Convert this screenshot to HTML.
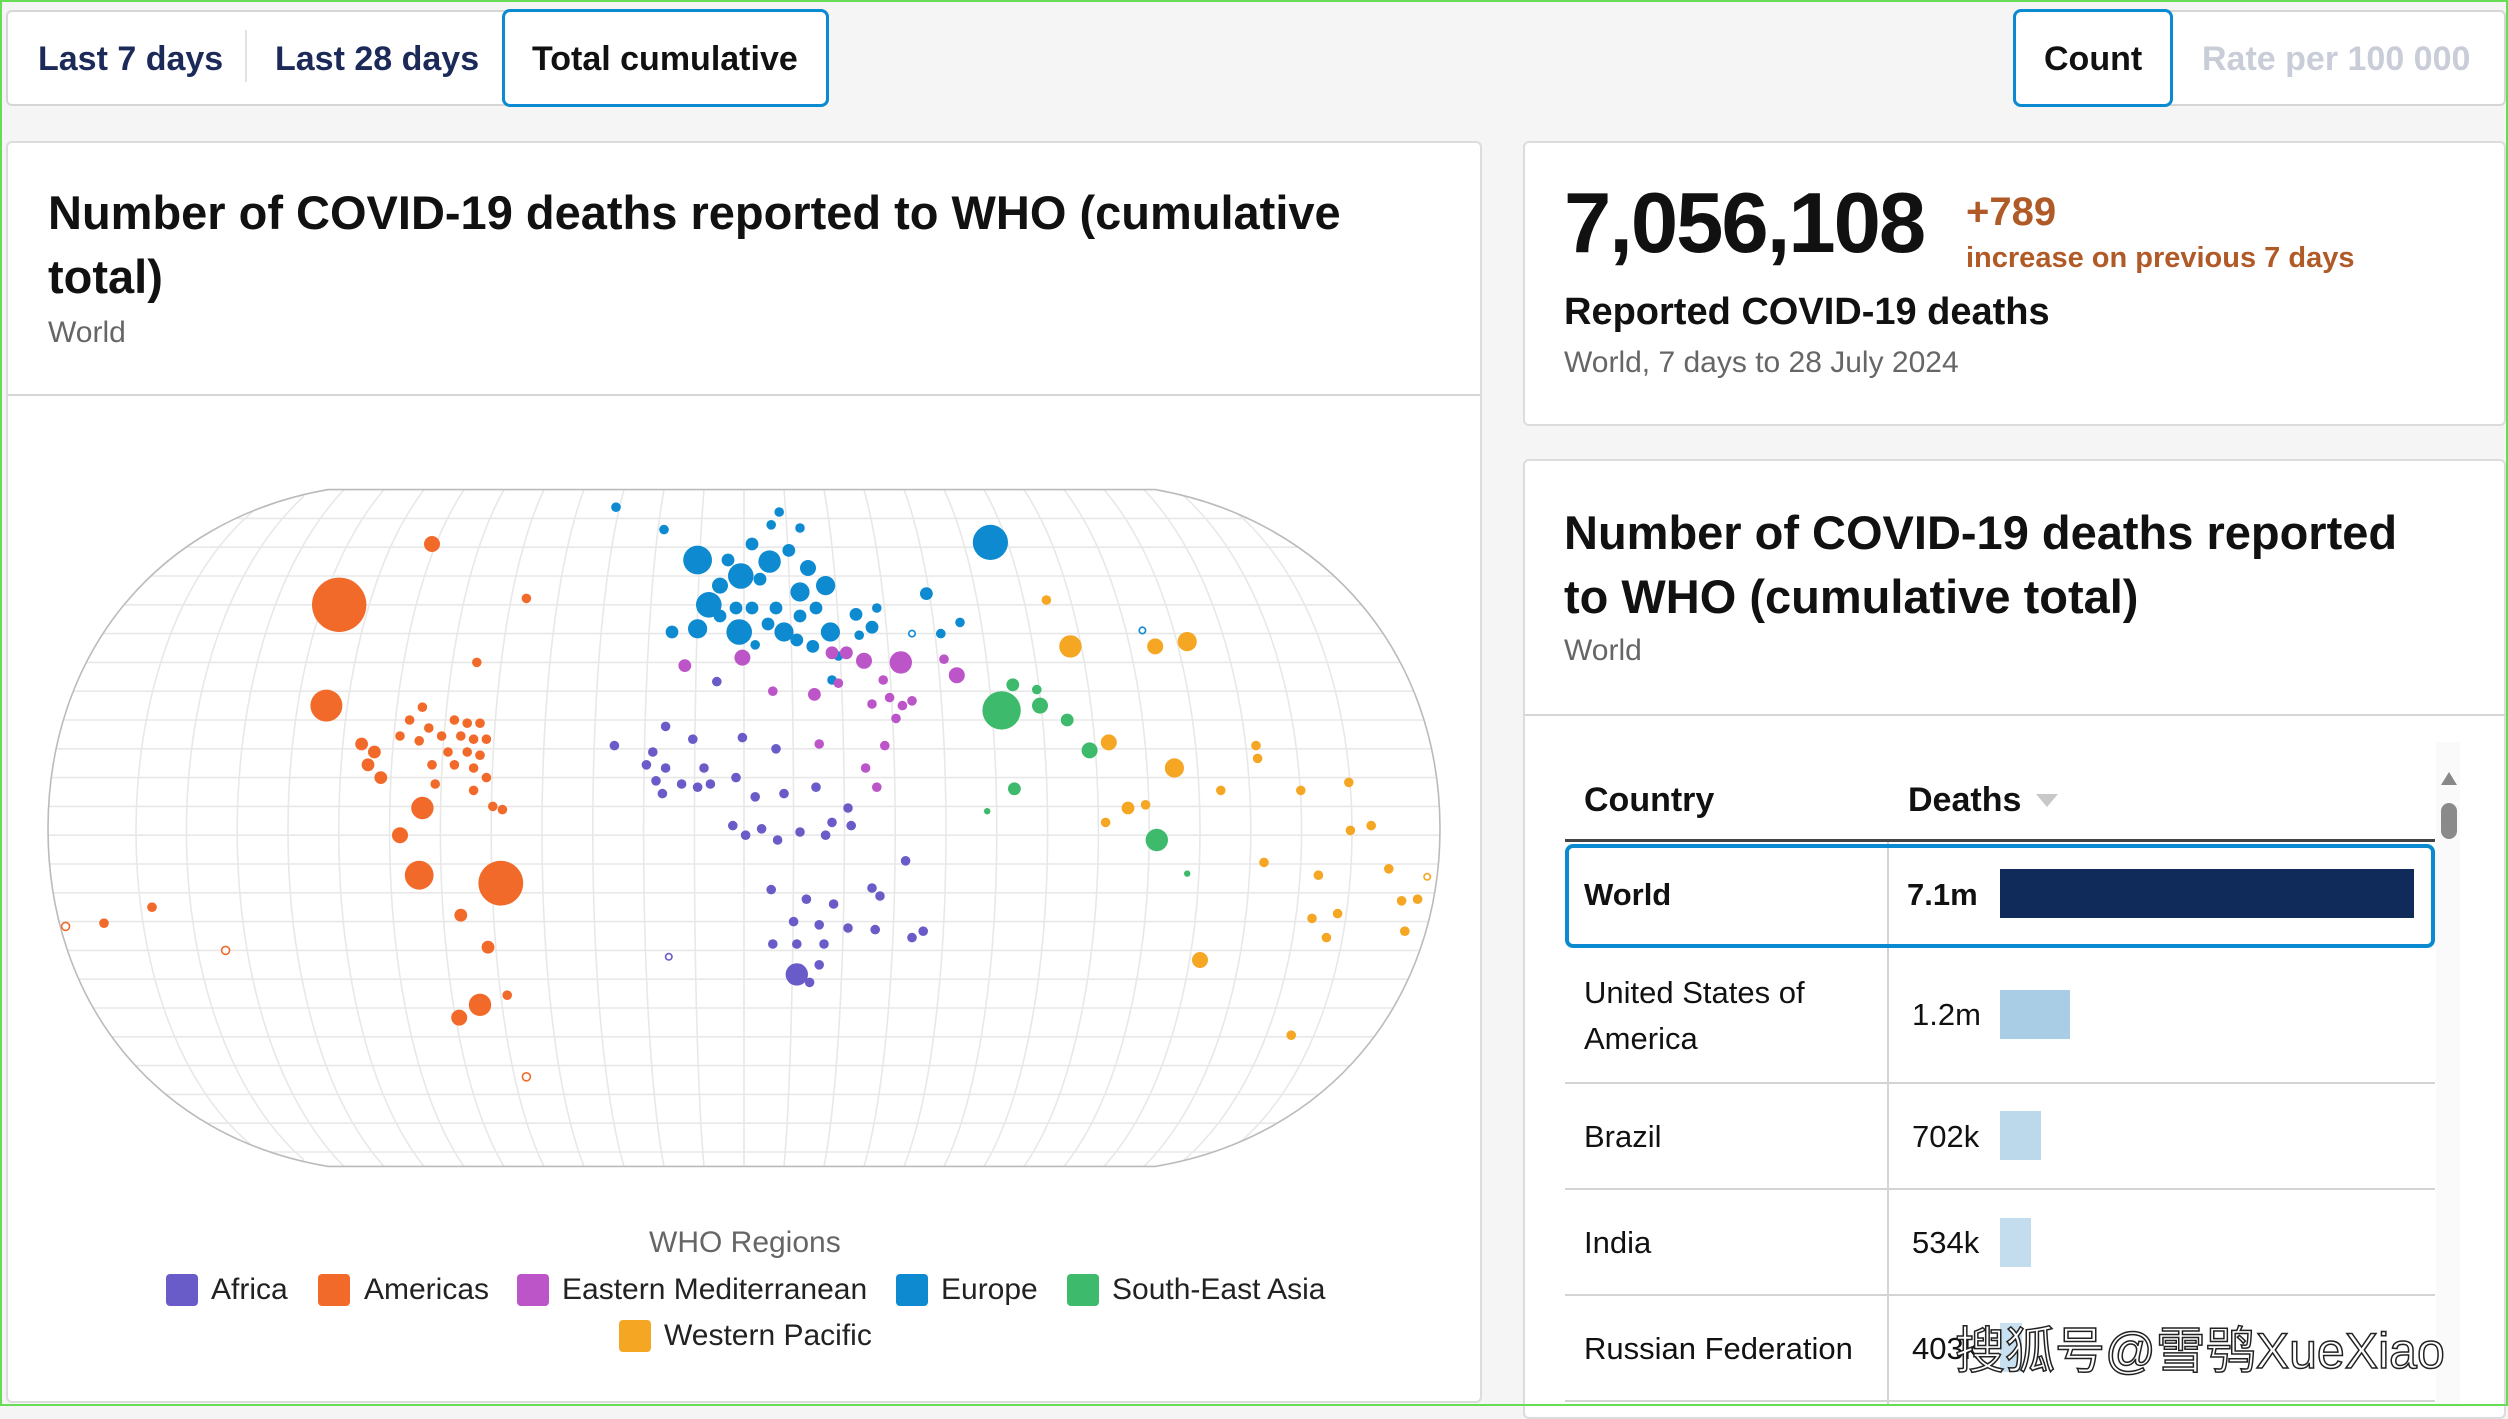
<!DOCTYPE html>
<html><head><meta charset="utf-8"><style>
*{margin:0;padding:0;box-sizing:border-box}
body{width:2508px;height:1406px;background:#f5f5f5;font-family:"Liberation Sans","Noto Sans CJK SC",sans-serif;position:relative;overflow:hidden;color:#111}
.frame{position:absolute;left:0;top:0;width:2508px;height:1406px;border:2px solid #66dd55;z-index:10;pointer-events:none}
.a{position:absolute;white-space:nowrap}
.card{position:absolute;background:#fff;border:2px solid #dcdcdc;border-radius:6px}
.tabs{position:absolute;background:#fff;border:2px solid #d6d6d6;border-radius:6px}
.act{position:absolute;border:3px solid #0a8ad0;border-radius:8px;background:#fff}
.t{font-size:34px;font-weight:bold;color:#1b2a58;line-height:35px}
.h{font-size:47px;font-weight:bold;line-height:48px;color:#111}
.s{font-size:30px;color:#666;line-height:30px}
.lg{font-size:30px;color:#222;line-height:30px}
.sq{position:absolute;width:32px;height:32px;border-radius:4px}
.row{position:absolute;left:1565px;width:870px;border-top:2px solid #d4d4d4}
.c{font-size:31px;line-height:31px;color:#111}
</style></head><body>
<div class="frame"></div>

<div class="tabs" style="left:6px;top:10px;width:823px;height:96px"></div>
<div class="a" style="left:245px;top:30px;width:2px;height:52px;background:#e2e2e2"></div>
<div class="act" style="left:502px;top:9px;width:327px;height:98px"></div>
<div class="a t" style="left:38px;top:42px">Last 7 days</div>
<div class="a t" style="left:275px;top:42px">Last 28 days</div>
<div class="a t" style="left:532px;top:42px;color:#111">Total cumulative</div>

<div class="tabs" style="left:2013px;top:10px;width:493px;height:96px"></div>
<div class="act" style="left:2013px;top:9px;width:160px;height:98px"></div>
<div class="a t" style="left:2044px;top:42px;color:#111">Count</div>
<div class="a t" style="left:2202px;top:42px;color:#c9cdd8">Rate per 100 000</div>

<div class="card" style="left:6px;top:141px;width:1476px;height:1262px"></div>
<div class="a" style="left:8px;top:394px;width:1472px;height:2px;background:#d6d6d6"></div>
<div class="a h" style="left:48px;top:189px">Number of COVID-19 deaths reported to WHO (cumulative</div>
<div class="a h" style="left:48px;top:253px">total)</div>
<div class="a s" style="left:48px;top:318px">World</div>

<svg class="a" style="left:0;top:0" width="2508" height="1406" viewBox="0 0 1567.5 878.75">
<defs><clipPath id="cp"><path d="M205,306 L722,306 C830,325 900,410 900,518 C900,626 830,711 722,729 L205,729 C97,711 30,626 30,518 C30,410 97,325 205,306 Z"/></clipPath></defs>
<g clip-path="url(#cp)" stroke="#e8e8e8" stroke-width="1" fill="none">
<path d="M0,324H900M0,342H900M0,360H900M0,378H900M0,396H900M0,414H900M0,432H900M0,450H900M0,468H900M0,486H900M0,504H900M0,522H900M0,540H900M0,558H900M0,576H900M0,594H900M0,612H900M0,630H900M0,648H900M0,666H900M0,684H900M0,702H900M0,720H900"/>
<path d="M465,306V729"/>
<path d="M440,306C432,400 432,640 440,729M490,306C498,400 498,640 490,729"/>
<path d="M415,306C398,400 398,640 415,729M515,306C532,400 532,640 515,729"/>
<path d="M390,306C364,400 364,640 390,729M540,306C566,400 566,640 540,729"/>
<path d="M365,306C330,400 330,640 365,729M565,306C600,400 600,640 565,729"/>
<path d="M340,306C296,400 296,640 340,729M590,306C634,400 634,640 590,729"/>
<path d="M315,306C262,400 262,640 315,729M615,306C668,400 668,640 615,729"/>
<path d="M290,306C228,400 228,640 290,729M640,306C702,400 702,640 640,729"/>
<path d="M265,306C194,400 194,640 265,729M665,306C736,400 736,640 665,729"/>
<path d="M240,306C160,400 160,640 240,729M690,306C770,400 770,640 690,729"/>
<path d="M215,306C126,400 126,640 215,729M715,306C804,400 804,640 715,729"/>
<path d="M190,310C92,400 92,640 190,725M740,310C838,400 838,640 740,725"/>
<path d="M160,318C60,400 60,640 160,718M770,318C870,400 870,640 770,718"/>
</g>
<path d="M205,306 L722,306 C830,325 900,410 900,518 C900,626 830,711 722,729 L205,729 C97,711 30,626 30,518 C30,410 97,325 205,306 Z" fill="none" stroke="#bbb" stroke-width="1"/>
<g fill="#f26a2a">
<circle cx="212" cy="378" r="17"/><circle cx="270" cy="340" r="5"/><circle cx="329" cy="374" r="3"/><circle cx="298" cy="414" r="3"/><circle cx="204" cy="441" r="10"/><circle cx="226" cy="465" r="4"/><circle cx="234" cy="470" r="4"/><circle cx="230" cy="478" r="4"/><circle cx="238" cy="486" r="4"/><circle cx="264" cy="505" r="7"/><circle cx="250" cy="522" r="5"/><circle cx="262" cy="547" r="9"/><circle cx="313" cy="552" r="14"/><circle cx="288" cy="572" r="4"/><circle cx="305" cy="592" r="4"/><circle cx="300" cy="628" r="7"/><circle cx="287" cy="636" r="5"/><circle cx="317" cy="622" r="3"/><circle cx="264" cy="442" r="3"/><circle cx="256" cy="450" r="3"/><circle cx="268" cy="455" r="3"/><circle cx="276" cy="460" r="3"/><circle cx="284" cy="450" r="3"/><circle cx="292" cy="452" r="3"/><circle cx="300" cy="452" r="3"/><circle cx="288" cy="460" r="3"/><circle cx="296" cy="462" r="3"/><circle cx="304" cy="462" r="3"/><circle cx="280" cy="470" r="3"/><circle cx="292" cy="470" r="3"/><circle cx="300" cy="472" r="3"/><circle cx="284" cy="478" r="3"/><circle cx="296" cy="480" r="3"/><circle cx="304" cy="486" r="3"/><circle cx="250" cy="460" r="3"/><circle cx="262" cy="463" r="3"/><circle cx="270" cy="478" r="3"/><circle cx="296" cy="494" r="3"/><circle cx="308" cy="504" r="3"/><circle cx="314" cy="506" r="3"/><circle cx="272" cy="490" r="3"/><circle cx="95" cy="567" r="3"/><circle cx="65" cy="577" r="3"/>
</g>
<g fill="#fff" stroke="#f26a2a"><circle cx="41" cy="579" r="2.5"/><circle cx="141" cy="594" r="2.5"/><circle cx="329" cy="673" r="2.5"/></g>
<g fill="#0d8ad0">
<circle cx="619" cy="339" r="11"/><circle cx="436" cy="350" r="9"/><circle cx="463" cy="360" r="8"/><circle cx="481" cy="351" r="7"/><circle cx="443" cy="378" r="8"/><circle cx="462" cy="395" r="8"/><circle cx="436" cy="393" r="6"/><circle cx="420" cy="395" r="4"/><circle cx="500" cy="370" r="6"/><circle cx="516" cy="366" r="6"/><circle cx="490" cy="395" r="6"/><circle cx="519" cy="395" r="6"/><circle cx="450" cy="366" r="5"/><circle cx="470" cy="340" r="4"/><circle cx="493" cy="344" r="4"/><circle cx="505" cy="355" r="5"/><circle cx="455" cy="350" r="4"/><circle cx="475" cy="362" r="4"/><circle cx="485" cy="380" r="4"/><circle cx="470" cy="380" r="4"/><circle cx="460" cy="380" r="4"/><circle cx="450" cy="385" r="4"/><circle cx="480" cy="390" r="4"/><circle cx="500" cy="385" r="4"/><circle cx="510" cy="380" r="4"/><circle cx="498" cy="400" r="4"/><circle cx="508" cy="404" r="4"/><circle cx="535" cy="384" r="4"/><circle cx="545" cy="392" r="4"/><circle cx="548" cy="380" r="3"/><circle cx="579" cy="371" r="4"/><circle cx="588" cy="396" r="3"/><circle cx="600" cy="389" r="3"/><circle cx="537" cy="397" r="3"/><circle cx="524" cy="410" r="3"/><circle cx="520" cy="425" r="3"/><circle cx="472" cy="403" r="3"/><circle cx="415" cy="331" r="3"/><circle cx="385" cy="317" r="3"/><circle cx="482" cy="328" r="3"/><circle cx="500" cy="330" r="3"/><circle cx="487" cy="320" r="3"/>
</g>
<g fill="#fff" stroke="#0d8ad0"><circle cx="570" cy="396" r="2"/><circle cx="714" cy="394" r="2"/></g>
<g fill="#bb55c8">
<circle cx="563" cy="414" r="7"/><circle cx="598" cy="422" r="5"/><circle cx="540" cy="413" r="5"/><circle cx="529" cy="408" r="4"/><circle cx="520" cy="408" r="4"/><circle cx="509" cy="434" r="4"/><circle cx="464" cy="411" r="5"/><circle cx="483" cy="432" r="3"/><circle cx="428" cy="416" r="4"/><circle cx="552" cy="425" r="3"/><circle cx="545" cy="440" r="3"/><circle cx="556" cy="436" r="3"/><circle cx="564" cy="441" r="3"/><circle cx="570" cy="438" r="3"/><circle cx="560" cy="449" r="3"/><circle cx="590" cy="412" r="3"/><circle cx="512" cy="465" r="3"/><circle cx="541" cy="480" r="3"/><circle cx="548" cy="492" r="3"/><circle cx="553" cy="466" r="3"/><circle cx="524" cy="427" r="3"/>
</g>
<g fill="#6a5cc8">
<circle cx="498" cy="609" r="7"/><circle cx="448" cy="426" r="3"/><circle cx="384" cy="466" r="3"/><circle cx="408" cy="470" r="3"/><circle cx="416" cy="454" r="3"/><circle cx="433" cy="462" r="3"/><circle cx="464" cy="461" r="3"/><circle cx="485" cy="468" r="3"/><circle cx="416" cy="480" r="3"/><circle cx="404" cy="478" r="3"/><circle cx="410" cy="488" r="3"/><circle cx="426" cy="490" r="3"/><circle cx="436" cy="492" r="3"/><circle cx="444" cy="490" r="3"/><circle cx="414" cy="496" r="3"/><circle cx="440" cy="480" r="3"/><circle cx="460" cy="486" r="3"/><circle cx="472" cy="498" r="3"/><circle cx="490" cy="496" r="3"/><circle cx="510" cy="492" r="3"/><circle cx="530" cy="505" r="3"/><circle cx="458" cy="516" r="3"/><circle cx="466" cy="522" r="3"/><circle cx="476" cy="518" r="3"/><circle cx="500" cy="520" r="3"/><circle cx="516" cy="522" r="3"/><circle cx="520" cy="514" r="3"/><circle cx="532" cy="516" r="3"/><circle cx="486" cy="525" r="3"/><circle cx="482" cy="556" r="3"/><circle cx="504" cy="562" r="3"/><circle cx="521" cy="565" r="3"/><circle cx="545" cy="555" r="3"/><circle cx="550" cy="560" r="3"/><circle cx="566" cy="538" r="3"/><circle cx="496" cy="576" r="3"/><circle cx="512" cy="578" r="3"/><circle cx="530" cy="580" r="3"/><circle cx="547" cy="581" r="3"/><circle cx="570" cy="586" r="3"/><circle cx="577" cy="582" r="3"/><circle cx="483" cy="590" r="3"/><circle cx="498" cy="590" r="3"/><circle cx="515" cy="590" r="3"/><circle cx="512" cy="603" r="3"/><circle cx="506" cy="614" r="3"/>
</g>
<circle cx="418" cy="598" r="2" fill="#fff" stroke="#6a5cc8"/>
<g fill="#3dba6b">
<circle cx="626" cy="444" r="12"/><circle cx="650" cy="441" r="5"/><circle cx="633" cy="428" r="4"/><circle cx="648" cy="431" r="3"/><circle cx="667" cy="450" r="4"/><circle cx="681" cy="469" r="5"/><circle cx="634" cy="493" r="4"/><circle cx="617" cy="507" r="2"/><circle cx="723" cy="525" r="7"/><circle cx="742" cy="546" r="2"/>
</g>
<g fill="#f5a623">
<circle cx="669" cy="404" r="7"/><circle cx="742" cy="401" r="6"/><circle cx="722" cy="404" r="5"/><circle cx="654" cy="375" r="3"/><circle cx="693" cy="464" r="5"/><circle cx="734" cy="480" r="6"/><circle cx="705" cy="505" r="4"/><circle cx="716" cy="503" r="3"/><circle cx="691" cy="514" r="3"/><circle cx="763" cy="494" r="3"/><circle cx="785" cy="466" r="3"/><circle cx="786" cy="474" r="3"/><circle cx="813" cy="494" r="3"/><circle cx="843" cy="489" r="3"/><circle cx="857" cy="516" r="3"/><circle cx="844" cy="519" r="3"/><circle cx="790" cy="539" r="3"/><circle cx="824" cy="547" r="3"/><circle cx="868" cy="543" r="3"/><circle cx="886" cy="562" r="3"/><circle cx="876" cy="563" r="3"/><circle cx="820" cy="574" r="3"/><circle cx="836" cy="571" r="3"/><circle cx="829" cy="586" r="3"/><circle cx="878" cy="582" r="3"/><circle cx="750" cy="600" r="5"/><circle cx="807" cy="647" r="3"/>
</g>
<circle cx="892" cy="548" r="2" fill="#fff" stroke="#f5a623"/>
</svg>

<div class="a" style="left:649px;top:1228px;font-size:30px;line-height:30px;color:#666">WHO Regions</div>
<div class="sq" style="left:166px;top:1274px;background:#6a5cc8"></div><div class="a lg" style="left:211px;top:1275px">Africa</div>
<div class="sq" style="left:318px;top:1274px;background:#f26a2a"></div><div class="a lg" style="left:364px;top:1275px">Americas</div>
<div class="sq" style="left:517px;top:1274px;background:#bb55c8"></div><div class="a lg" style="left:562px;top:1275px">Eastern Mediterranean</div>
<div class="sq" style="left:896px;top:1274px;background:#0d8ad0"></div><div class="a lg" style="left:941px;top:1275px">Europe</div>
<div class="sq" style="left:1067px;top:1274px;background:#3dba6b"></div><div class="a lg" style="left:1112px;top:1275px">South-East Asia</div>
<div class="sq" style="left:619px;top:1320px;background:#f5a623"></div><div class="a lg" style="left:664px;top:1321px">Western Pacific</div>

<div class="card" style="left:1523px;top:141px;width:983px;height:285px"></div>
<div class="a" style="left:1564px;top:181px;font-size:85px;font-weight:bold;line-height:85px;letter-spacing:-2px">7,056,108</div>
<div class="a" style="left:1966px;top:192px;font-size:40px;font-weight:bold;line-height:40px;color:#b05a28">+789</div>
<div class="a" style="left:1966px;top:244px;font-size:29px;font-weight:bold;line-height:29px;color:#b05a28">increase on previous 7 days</div>
<div class="a" style="left:1564px;top:293px;font-size:38px;font-weight:bold;line-height:38px">Reported COVID-19 deaths</div>
<div class="a s" style="left:1564px;top:348px">World, 7 days to 28 July 2024</div>

<div class="card" style="left:1523px;top:459px;width:983px;height:960px"></div>
<div class="a" style="left:1525px;top:714px;width:981px;height:2px;background:#d6d6d6"></div>
<div class="a h" style="left:1564px;top:509px">Number of COVID-19 deaths reported</div>
<div class="a h" style="left:1564px;top:573px">to WHO (cumulative total)</div>
<div class="a s" style="left:1564px;top:636px">World</div>

<div class="a" style="left:2436px;top:742px;width:24px;height:664px;background:#fafafa"></div>
<div class="a" style="left:2441px;top:772px;width:0;height:0;border-left:8px solid transparent;border-right:8px solid transparent;border-bottom:13px solid #888"></div>
<div class="a" style="left:2441px;top:803px;width:16px;height:36px;border-radius:8px;background:#8a8a8a"></div>

<div class="a" style="left:1584px;top:783px;font-size:34px;font-weight:bold;line-height:34px">Country</div>
<div class="a" style="left:1908px;top:783px;font-size:34px;font-weight:bold;line-height:34px">Deaths</div>
<div class="a" style="left:2036px;top:794px;width:0;height:0;border-left:11px solid transparent;border-right:11px solid transparent;border-top:13px solid #c8c8c8"></div>
<div class="a" style="left:1565px;top:839px;width:870px;height:3px;background:#444"></div>
<div class="a" style="left:1887px;top:842px;width:2px;height:564px;background:#d4d4d4"></div>
<div class="row" style="top:1082px"></div>
<div class="row" style="top:1188px"></div>
<div class="row" style="top:1294px"></div>
<div class="row" style="top:1400px"></div>
<div class="a" style="left:1565px;top:844px;width:870px;height:104px;border:4px solid #0a8ad0;border-radius:8px"></div>

<div class="a c" style="left:1584px;top:879px;font-weight:bold">World</div>
<div class="a c" style="left:1907px;top:879px;font-weight:bold">7.1m</div>
<div class="a" style="left:2000px;top:869px;width:414px;height:49px;background:#102b5a"></div>

<div class="a c" style="left:1584px;top:977px">United States of</div>
<div class="a c" style="left:1584px;top:1023px">America</div>
<div class="a c" style="left:1912px;top:999px">1.2m</div>
<div class="a" style="left:2000px;top:990px;width:70px;height:49px;background:#a8cde5"></div>

<div class="a c" style="left:1584px;top:1121px">Brazil</div>
<div class="a c" style="left:1912px;top:1121px">702k</div>
<div class="a" style="left:2000px;top:1111px;width:41px;height:49px;background:#bcd9ec"></div>

<div class="a c" style="left:1584px;top:1227px">India</div>
<div class="a c" style="left:1912px;top:1227px">534k</div>
<div class="a" style="left:2000px;top:1218px;width:31px;height:49px;background:#c3dcee"></div>

<div class="a c" style="left:1584px;top:1333px">Russian Federation</div>
<div class="a c" style="left:1912px;top:1333px">403k</div>
<div class="a" style="left:2000px;top:1323px;width:22px;height:49px;background:#c8e0f0"></div>

<div class="a" style="left:1955px;top:1326px;font-size:50px;line-height:50px;color:#fff;font-family:'Liberation Sans','WenQuanYi Zen Hei',sans-serif;-webkit-text-stroke:1.5px #222;z-index:5">搜狐号@雪鸮XueXiao</div>
</body></html>
